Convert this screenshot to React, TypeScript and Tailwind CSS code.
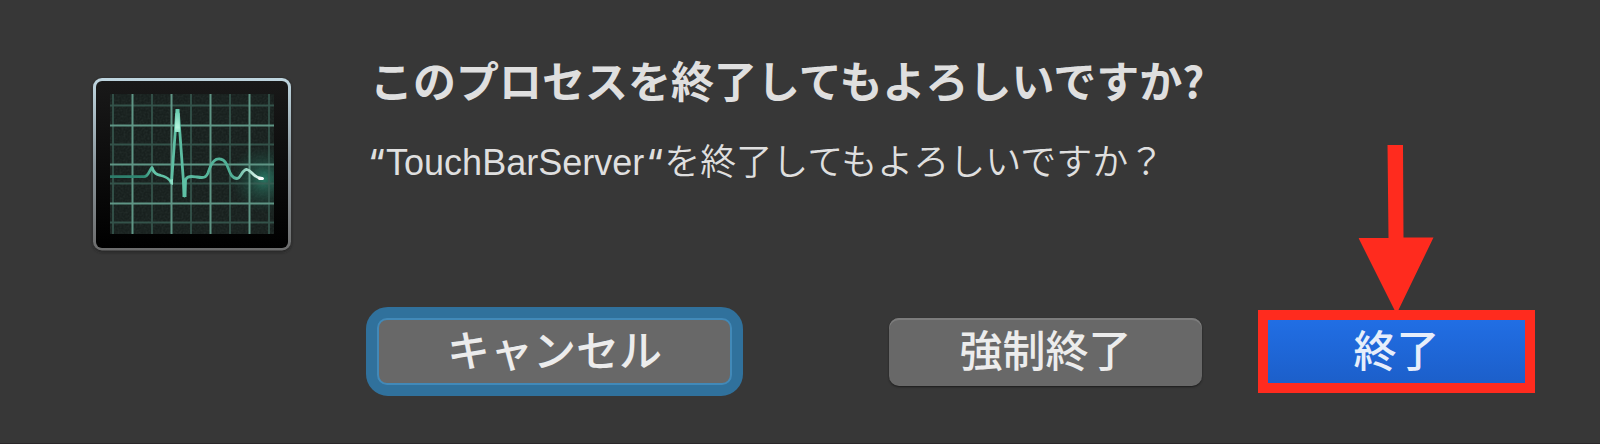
import React from "react";

const MINOR_X = [113, 152, 191, 230, 269];
const MAJOR_X = [132, 171, 210, 249];
const MINOR_Y = [105, 144, 183, 222];
const MAJOR_Y = [125, 164, 203];

const ActivityIcon = () => {
  return (
    <svg
      viewBox="88 72 208 186"
      className="w-[208px] h-[186px] shrink-0"
      aria-hidden="true"
    >
      <defs>
        <linearGradient id="frame" x1="0" y1="0" x2="0" y2="1">
          <stop offset="0" stopColor="#bfd6e0" />
          <stop offset="0.5" stopColor="#8b979d" />
          <stop offset="1" stopColor="#6c6c6c" />
        </linearGradient>
        <linearGradient id="bezel" x1="0" y1="0" x2="0" y2="1">
          <stop offset="0" stopColor="#191919" />
          <stop offset="1" stopColor="#000000" />
        </linearGradient>
        <linearGradient
          id="trace"
          gradientUnits="userSpaceOnUse"
          x1="110"
          y1="0"
          x2="264"
          y2="0"
        >
          <stop offset="0" stopColor="#2c7a68" />
          <stop offset="0.22" stopColor="#2f8a74" />
          <stop offset="0.28" stopColor="#63c4a8" />
          <stop offset="0.8" stopColor="#4fae95" />
          <stop offset="0.9" stopColor="#a5dccb" />
          <stop offset="1" stopColor="#ffffff" />
        </linearGradient>
        <radialGradient id="glow">
          <stop offset="0" stopColor="#2f9c80" stopOpacity="0.7" />
          <stop offset="0.4" stopColor="#2a7a66" stopOpacity="0.4" />
          <stop offset="1" stopColor="#1f5a4c" stopOpacity="0" />
        </radialGradient>
        <linearGradient id="peak" x1="0" y1="0" x2="0" y2="1">
          <stop offset="0" stopColor="#5fc7a9" />
          <stop offset="0.8" stopColor="#b6f5df" />
          <stop offset="1" stopColor="#8ee0c6" />
        </linearGradient>
        <filter id="grain" x="0" y="0" width="1" height="1">
          <feTurbulence type="fractalNoise" baseFrequency="0.5" numOctaves="2" />
          <feColorMatrix values="0 0 0 0 0.35  0 0 0 0 0.5  0 0 0 0 0.45  0.6 0 0 0 -0.2" />
        </filter>
        <filter id="shadow" x="-0.1" y="-0.1" width="1.2" height="1.2">
          <feGaussianBlur stdDeviation="1.5" />
        </filter>
        <clipPath id="screen">
          <rect x="110" y="94" width="164" height="140" />
        </clipPath>
      </defs>

      <rect x="93" y="79" width="198" height="173" rx="9" fill="#1e1e1e" opacity="0.7" filter="url(#shadow)" />
      <rect x="93" y="78" width="198" height="172.5" rx="9" fill="url(#frame)" />
      <rect x="96" y="81" width="192" height="167" rx="6" fill="url(#bezel)" />

      <g clipPath="url(#screen)">
        <rect x="110" y="94" width="164" height="140" fill="#18201e" />
        <rect x="110" y="94" width="164" height="140" filter="url(#grain)" opacity="0.25" />
        <circle cx="264" cy="179" r="34" fill="url(#glow)" />
        <g stroke="#3a5f55" strokeWidth="1.8" opacity="0.8">
          {MINOR_X.map((x) => (
            <path key={x} d={`M${x} 94V234`} />
          ))}
          {MINOR_Y.map((y) => (
            <path key={y} d={`M110 ${y + 0.5}H274`} />
          ))}
        </g>
        <g stroke="#5f9585" strokeWidth="2">
          {MAJOR_X.map((x) => (
            <path key={x} d={`M${x + 0.5} 94V234`} />
          ))}
          {MAJOR_Y.map((y) => (
            <path key={y} d={`M110 ${y + 0.5}H274`} />
          ))}
        </g>
        <path
          d="M110 176.7H144C148 176.7 149 171 152 167.5C154 174 157 174.5 161 175.5C166 176.5 169 178 171.5 183L176.5 114H178.5L184.5 196L185.5 180C187 175 193 176.5 197 177C203 178 206 178 208 173C212 160 216 158.5 220 159C230 160 227 178 237 178.5C241 178.5 242 169 247 169.5C252 170.5 253 178 262 178.5"
          fill="none"
          stroke="url(#trace)"
          strokeWidth="2.8"
          strokeLinejoin="round"
          strokeLinecap="round"
        />
        <path d="M175.5 109H179.5L180 132H175Z" fill="url(#peak)" />
        <path d="M169.5 180L173 179V185L171 184Z" fill="#8ee0c6" />
        <path d="M182.5 181L186.5 179V197H182.5Z" fill="#5fc0a5" />
        <ellipse cx="261" cy="178.5" rx="3" ry="1.6" fill="#ffffff" />
      </g>
    </svg>
  );
};

const Arrow = () => {
  return (
    <svg
      viewBox="0 0 77 167"
      className="absolute bottom-full left-1/2 -translate-x-1/2 -mb-0.5 w-[77px] h-[167px]"
      aria-hidden="true"
    >
      <path d="M29 0H44.5L45 92.5H75L39 167H37L0 93H30Z" fill="#ff2b1e" />
    </svg>
  );
};

const Quote = () => {
  return (
    <span className="ml-0.5 mr-px leading-none font-medium font-['Inter',sans-serif]">“</span>
  );
};

const App = () => {
  return (
    <main
      lang="ja"
      className="min-h-screen flex items-start bg-[#373737] border-b border-[#2a2729] pt-[49px] pb-[47px] pl-[88px] pr-[65px] font-['Liberation_Sans','Noto_Sans_CJK_JP',sans-serif] text-[#dfdfdf]"
    >
      <div className="pt-[23px]">
        <ActivityIcon />
      </div>

      <section className="flex-1 ml-[70px]">
        <h1 className="pl-1 text-[43px] leading-[60px] font-bold font-['Noto_Sans_CJK_JP',sans-serif]">
          このプロセスを終了してもよろしいですか?
        </h1>
        <p className="mt-7 h-[52px] text-[36px] leading-[52px] font-[350]">
          <Quote />
          TouchBarServer
          <Quote />
          を終了してもよろしいですか？
        </p>

        <div className="flex items-center mt-[118px] text-[43px] leading-[60px] font-medium text-[#ececec]">
          <button
            type="button"
            className="w-[377px] h-[89px] rounded-[22px] border-[11px] border-[#30719c] bg-[#30719c]"
          >
            <span className="flex items-center justify-center h-full rounded-[10px] border-2 border-[#4289b8] bg-[#686868]">
              キャンセル
            </span>
          </button>
          <button
            type="button"
            className="ml-auto w-[313px] h-[68px] rounded-[10px] bg-[#686868] shadow-[inset_0_2px_0_#7c7c7c,0_1px_2px_#1c1c1c]"
          >
            強制終了
          </button>
          <div className="relative ml-14">
            <Arrow />
            <button
              type="button"
              className="block w-[277px] h-[83px] border-10 border-[#ff2b1e] bg-linear-to-b from-[#216ee4] to-[#1c5fca] text-[#e6eefb]"
            >
              終了
            </button>
          </div>
        </div>
      </section>
    </main>
  );
};

export default App;
